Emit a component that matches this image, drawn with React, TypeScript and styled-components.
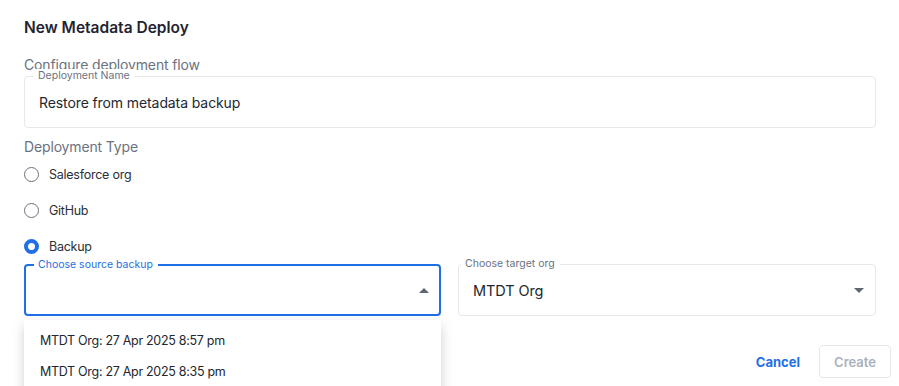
import React from "react";
import styled, { createGlobalStyle } from "styled-components";

const Global = createGlobalStyle`
  html, body { margin: 0; padding: 0; background: #ffffff; }
  body { font-family: Inter, "Noto Sans", "Liberation Sans", sans-serif; -webkit-font-smoothing: antialiased; }
  * { box-sizing: border-box; }
`;

const BLUE = "#1f6fe5";

const Dialog = styled.div`
  width: 899px;
  height: 386px;
  overflow: hidden;
  position: relative;
  background: #fff;
`;

const Content = styled.div`
  display: flex;
  flex-direction: column;
  padding: 0 23px 0 24px;
`;

const Title = styled.h2`
  margin: 17px 0 0;
  height: 22px;
  line-height: 22px;
  font-size: 15.5px;
  font-weight: 600;
  color: #1f2430;
`;

const Subtitle = styled.div<{ $mt: number }>`
  margin-top: ${(p) => p.$mt}px;
  height: 20px;
  line-height: 20px;
  font-size: 14px;
  letter-spacing: -0.15px;
  color: #6b7280;
`;

const Field = styled.div<{ $focused?: boolean; $mt?: number }>`
  position: relative;
  height: 52px;
  margin-top: ${(p) => p.$mt ?? 0}px;
  border: ${(p) => (p.$focused ? `2px solid ${BLUE}` : "1px solid #e6e8eb")};
  border-radius: 4px;
  display: flex;
  align-items: center;
  padding: 0 ${(p) => (p.$focused ? 13 : 14)}px;
  background: #fff;
`;

const Legend = styled.span<{ $left: number; $focused?: boolean }>`
  position: absolute;
  top: -8px;
  left: ${(p) => p.$left}px;
  padding: 0 5px 0 4px;
  background: #fff;
  font-size: 10.5px;
  line-height: 14px;
  color: ${(p) => (p.$focused ? BLUE : "#6b7280")};
`;

const Value = styled.span<{ $size?: number }>`
  font-size: ${(p) => p.$size ?? 14}px;
  letter-spacing: -0.1px;
  color: #222831;
  flex: 1;
`;

const RadioGroup = styled.div`
  display: flex;
  flex-direction: column;
  margin-top: -1px;
`;

const RadioRow = styled.label`
  display: flex;
  align-items: center;
  height: 36px;
  gap: 10px;
  font-size: 12.5px;
  letter-spacing: -0.25px;
  color: #2b2f36;
`;

const RadioCircle = styled.span<{ $checked?: boolean }>`
  width: 15px;
  height: 15px;
  border-radius: 50%;
  flex: none;
  border: ${(p) => (p.$checked ? `4.5px solid ${BLUE}` : "1.5px solid #6b7280")};
  background: #fff;
`;

const SelectRow = styled.div`
  display: grid;
  grid-template-columns: 417px 418px;
  column-gap: 17px;
`;

const SelectWrap = styled.div`
  position: relative;
`;

const Menu = styled.div`
  position: absolute;
  top: 56px;
  left: 0;
  width: 417px;
  height: 80px;
  background: #fff;
  border-radius: 4px;
  box-shadow: 0 5px 5px -3px rgba(0,0,0,0.12), 0 8px 10px 1px rgba(0,0,0,0.08), 0 3px 14px 2px rgba(0,0,0,0.07);
  padding-top: 5px;
  z-index: 5;
`;

const MenuItem = styled.div`
  height: 31px;
  line-height: 31px;
  padding-left: 16px;
  font-size: 12.5px;
  letter-spacing: -0.3px;
  color: #23272e;
`;

const Actions = styled.div`
  display: flex;
  justify-content: flex-end;
  align-items: center;
  gap: 19px;
  padding: 29px 8px 0 0;
`;

const TextButton = styled.button`
  border: none;
  background: none;
  font-family: inherit;
  font-size: 13px;
  font-weight: 700;
  color: ${BLUE};
  padding: 0;
  cursor: pointer;
`;

const OutlineButton = styled.button`
  width: 72px;
  height: 33px;
  border: 1px solid #e5e7eb;
  border-radius: 4px;
  background: #fff;
  font-family: inherit;
  font-size: 13px;
  font-weight: 600;
  color: #aab1bb;
`;

const CaretBox = styled.span<{ $mr: number }>`
  display: flex;
  margin-right: ${(p) => p.$mr}px;
`;

const Caret = ({ up }: { up?: boolean }) => (
  <svg width="10" height="5" viewBox="0 0 10 5">
    <path d={up ? "M0 5 L5 0 L10 5 Z" : "M0 0 L10 0 L5 5 Z"} fill="#5f6670" />
  </svg>
);

export default function App() {
  return (
    <>
      <Global />
      <Dialog>
        <Content>
          <Title>New Metadata Deploy</Title>
          <Subtitle $mt={16}>Configure deployment flow</Subtitle>
          <Field $mt={1}>
            <Legend $left={9}>Deployment Name</Legend>
            <Value>Restore from metadata backup</Value>
          </Field>
          <Subtitle $mt={9}>Deployment Type</Subtitle>
          <RadioGroup>
            <RadioRow>
              <RadioCircle />
              Salesforce org
            </RadioRow>
            <RadioRow>
              <RadioCircle />
              GitHub
            </RadioRow>
            <RadioRow>
              <RadioCircle $checked />
              Backup
            </RadioRow>
          </RadioGroup>
          <SelectRow>
            <SelectWrap>
              <Field $focused>
                <Legend $left={8} $focused>Choose source backup</Legend>
                <Value />
                <CaretBox $mr={-3}><Caret up /></CaretBox>
              </Field>
              <Menu>
                <MenuItem>MTDT Org: 27 Apr 2025 8:57 pm</MenuItem>
                <MenuItem>MTDT Org: 27 Apr 2025 8:35 pm</MenuItem>
              </Menu>
            </SelectWrap>
            <SelectWrap>
              <Field>
                <Legend $left={2}>Choose target org</Legend>
                <Value $size={14.5}>MTDT Org</Value>
                <CaretBox $mr={-3}><Caret /></CaretBox>
              </Field>
            </SelectWrap>
          </SelectRow>
        </Content>
        <Actions>
          <TextButton>Cancel</TextButton>
          <OutlineButton>Create</OutlineButton>
        </Actions>
      </Dialog>
    </>
  );
}
